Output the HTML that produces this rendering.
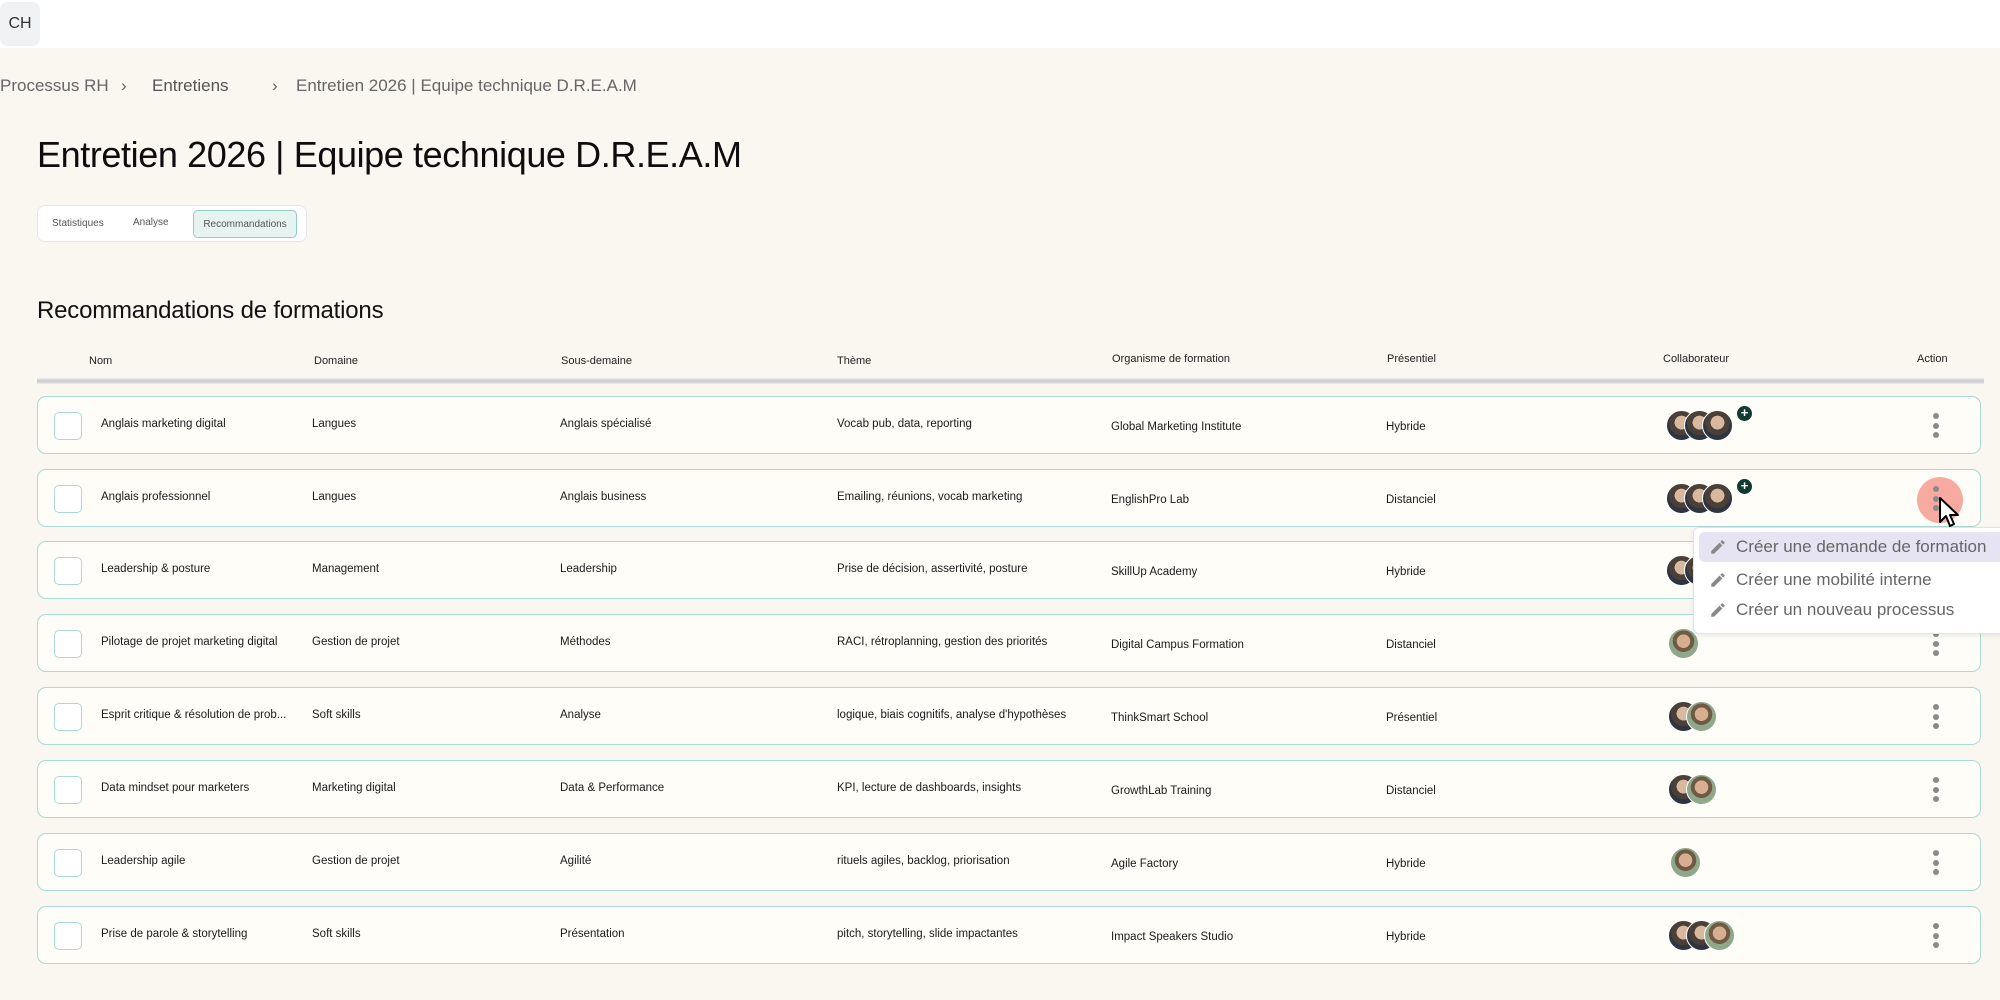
<!DOCTYPE html>
<html><head><meta charset="utf-8">
<style>
*{box-sizing:border-box;margin:0;padding:0}
body{width:2000px;height:1000px;background:#faf6f0;font-family:"Liberation Sans",sans-serif;color:#111;position:relative;overflow:hidden}
.top{position:absolute;left:0;top:0;width:2000px;height:48px;background:#fff}
.ch{position:absolute;left:0;top:2px;width:40px;height:44px;background:#f1f2f3;border-radius:8px;font-size:16px;color:#333;display:flex;align-items:center;justify-content:center}
.bc{position:absolute;top:76px;left:0;font-size:17px;color:#666;white-space:nowrap}
.bc span{position:absolute;white-space:nowrap}
h1{position:absolute;left:37px;top:134px;font-size:36px;font-weight:500;letter-spacing:-0.4px;white-space:nowrap;color:#0d0d0d}
.tabs{position:absolute;left:37px;top:205px;width:270px;height:37px;background:#fff;border:1px solid #e6e6ea;border-radius:8px}
.tabs span{position:absolute;top:12px;font-size:10px;color:#555}
.tabs .act{top:4px;left:155px;width:104px;height:28px;background:#e6f3f1;border:1px solid #8fcfc8;border-radius:5px;display:flex;align-items:center;justify-content:center}
h2{position:absolute;left:37px;top:297px;font-size:24px;font-weight:500;letter-spacing:-0.2px;white-space:nowrap}
.hd{position:absolute;top:355px;font-size:11px;color:#222;white-space:nowrap}
.hl{position:absolute;left:37px;top:378px;width:1947px;height:6px;background:linear-gradient(#eee,#c8c8c8,#eee)}
.row{position:absolute;left:37px;width:1944px;height:58px;background:#fffdf8;border:1.5px solid #a9dad5;border-radius:9px}
.row .cb{position:absolute;left:16px;top:15px;width:28px;height:28px;border:1.5px solid #a9dad5;border-radius:5px;background:#fff}
.row .t{position:absolute;top:21px;font-size:11.5px;color:#1a1a1a;white-space:nowrap}
.row .t2{top:24px}
.dots{position:absolute;left:1895px;top:16px;width:6px}
.dots i{display:block;width:6px;height:6px;border-radius:50%;background:#8a8a8a;margin-bottom:3.5px}
.av{position:absolute;top:13px;width:31px;height:31px;border-radius:50%;border:1.5px solid #fff;background:radial-gradient(circle at 50% 40%,#d9b8a0 0 30%,#4b4038 31% 55%,#2e3440 56%)}
.av.b{background:radial-gradient(circle at 50% 42%,#d8ae90 0 30%,#6f5a44 31% 48%,#8fa88a 49%)}
.plus{position:absolute;top:9px;width:15px;height:15px;border-radius:50%;background:#0f3b31;color:#fff;font-size:13px;line-height:14px;text-align:center;font-weight:bold}
.menu{position:absolute;left:1693px;top:527px;width:320px;height:107px;background:#fff;border:1px solid #e2e0f3;border-radius:6px;box-shadow:0 2px 6px rgba(0,0,0,.08)}
.mi{position:absolute;left:5px;width:310px;height:30px;font-size:17px;color:#666;white-space:nowrap;padding-left:37px;line-height:30px}
.mi.h{background:#e6e4f3;border-radius:6px}
.mi svg{position:absolute;left:10px;top:6px}
</style></head><body>
<div class="top"><div class="ch">CH</div></div>
<div class="bc"><span style="left:0">Processus RH</span><span style="left:121px">›</span><span style="left:152px;color:#555">Entretiens</span><span style="left:272px">›</span><span style="left:296px">Entretien 2026 | Equipe technique D.R.E.A.M</span></div>
<h1>Entretien 2026 | Equipe technique D.R.E.A.M</h1>
<div class="tabs"><span style="left:14px">Statistiques</span><span style="left:95px;top:11px">Analyse</span><span class="act" style="font-size:10px;color:#555">Recommandations</span></div>
<h2>Recommandations de formations</h2>
<div class="hd" style="left:89px">Nom</div>
<div class="hd" style="left:314px">Domaine</div>
<div class="hd" style="left:561px">Sous-demaine</div>
<div class="hd" style="left:837px">Thème</div>
<div class="hd" style="left:1112px;top:353px">Organisme de formation</div>
<div class="hd" style="left:1387px;top:353px">Présentiel</div>
<div class="hd" style="left:1663px;top:353px">Collaborateur</div>
<div class="hd" style="left:1917px;top:353px">Action</div>
<div class="hl"></div>

<div class="row" style="top:396px"><div class="cb"></div><div class="t" style="left:63px">Anglais marketing digital</div><div class="t" style="left:274px">Langues</div><div class="t" style="left:522px">Anglais spécialisé</div><div class="t" style="left:799px">Vocab pub, data, reporting</div><div class="t t2" style="left:1073px">Global Marketing Institute</div><div class="t t2" style="left:1348px">Hybride</div><div class="av" style="left:1628px"></div><div class="av" style="left:1646px"></div><div class="av" style="left:1664px"></div><div class="plus" style="left:1699px">+</div><div class="dots"><i></i><i></i><i></i></div></div>

<div class="row" style="top:469px"><div class="cb"></div><div class="t" style="left:63px">Anglais professionnel</div><div class="t" style="left:274px">Langues</div><div class="t" style="left:522px">Anglais business</div><div class="t" style="left:799px">Emailing, réunions, vocab marketing</div><div class="t t2" style="left:1073px">EnglishPro Lab</div><div class="t t2" style="left:1348px">Distanciel</div><div class="av" style="left:1628px"></div><div class="av" style="left:1646px"></div><div class="av" style="left:1664px"></div><div class="plus" style="left:1699px">+</div><div style="position:absolute;left:1879px;top:7px;width:46px;height:46px;border-radius:50%;background:#f6aaa0"></div><div class="dots"><i></i><i></i><i></i></div><svg style="position:absolute;left:1900px;top:26px" width="26" height="34" viewBox="0 0 26 34"><path d="M2 2 L2 26 L8 20 L12 30 L16 28 L12 19 L20 19 Z" fill="#fff" stroke="#000" stroke-width="2" stroke-linejoin="round"/></svg></div>

<div class="row" style="top:541px"><div class="cb"></div><div class="t" style="left:63px">Leadership &amp; posture</div><div class="t" style="left:274px">Management</div><div class="t" style="left:522px">Leadership</div><div class="t" style="left:799px">Prise de décision, assertivité, posture</div><div class="t t2" style="left:1073px">SkillUp Academy</div><div class="t t2" style="left:1348px">Hybride</div><div class="av" style="left:1628px"></div><div class="av" style="left:1646px"></div><div class="dots"><i></i><i></i><i></i></div></div>

<div class="row" style="top:614px"><div class="cb"></div><div class="t" style="left:63px">Pilotage de projet marketing digital</div><div class="t" style="left:274px">Gestion de projet</div><div class="t" style="left:522px">Méthodes</div><div class="t" style="left:799px">RACI, rétroplanning, gestion des priorités</div><div class="t t2" style="left:1073px">Digital Campus Formation</div><div class="t t2" style="left:1348px">Distanciel</div><div class="av b" style="left:1630px"></div><div class="dots"><i></i><i></i><i></i></div></div>

<div class="row" style="top:687px"><div class="cb"></div><div class="t" style="left:63px">Esprit critique &amp; résolution de prob...</div><div class="t" style="left:274px">Soft skills</div><div class="t" style="left:522px">Analyse</div><div class="t" style="left:799px">logique, biais cognitifs, analyse d'hypothèses</div><div class="t t2" style="left:1073px">ThinkSmart School</div><div class="t t2" style="left:1348px">Présentiel</div><div class="av" style="left:1630px"></div><div class="av b" style="left:1648px"></div><div class="dots"><i></i><i></i><i></i></div></div>

<div class="row" style="top:760px"><div class="cb"></div><div class="t" style="left:63px">Data mindset pour marketers</div><div class="t" style="left:274px">Marketing digital</div><div class="t" style="left:522px">Data &amp; Performance</div><div class="t" style="left:799px">KPI, lecture de dashboards, insights</div><div class="t t2" style="left:1073px">GrowthLab Training</div><div class="t t2" style="left:1348px">Distanciel</div><div class="av" style="left:1630px"></div><div class="av b" style="left:1648px"></div><div class="dots"><i></i><i></i><i></i></div></div>

<div class="row" style="top:833px"><div class="cb"></div><div class="t" style="left:63px">Leadership agile</div><div class="t" style="left:274px">Gestion de projet</div><div class="t" style="left:522px">Agilité</div><div class="t" style="left:799px">rituels agiles, backlog, priorisation</div><div class="t t2" style="left:1073px">Agile Factory</div><div class="t t2" style="left:1348px">Hybride</div><div class="av b" style="left:1632px"></div><div class="dots"><i></i><i></i><i></i></div></div>

<div class="row" style="top:906px"><div class="cb"></div><div class="t" style="left:63px">Prise de parole &amp; storytelling</div><div class="t" style="left:274px">Soft skills</div><div class="t" style="left:522px">Présentation</div><div class="t" style="left:799px">pitch, storytelling, slide impactantes</div><div class="t t2" style="left:1073px">Impact Speakers Studio</div><div class="t t2" style="left:1348px">Hybride</div><div class="av" style="left:1630px"></div><div class="av" style="left:1648px"></div><div class="av b" style="left:1666px"></div><div class="dots"><i></i><i></i><i></i></div></div>

<div class="menu">
<div class="mi h" style="top:4px"><svg width="18" height="18" viewBox="0 0 24 24"><path d="M3 17.25V21h3.75L17.8 9.94l-3.75-3.75L3 17.25zM20.7 7.04a1 1 0 000-1.41l-2.34-2.34a1 1 0 00-1.41 0l-1.83 1.83 3.75 3.75 1.83-1.83z" fill="#888"/></svg>Créer une demande de formation</div>
<div class="mi" style="top:37px"><svg width="18" height="18" viewBox="0 0 24 24"><path d="M3 17.25V21h3.75L17.8 9.94l-3.75-3.75L3 17.25zM20.7 7.04a1 1 0 000-1.41l-2.34-2.34a1 1 0 00-1.41 0l-1.83 1.83 3.75 3.75 1.83-1.83z" fill="#888"/></svg>Créer une mobilité interne</div>
<div class="mi" style="top:67px"><svg width="18" height="18" viewBox="0 0 24 24"><path d="M3 17.25V21h3.75L17.8 9.94l-3.75-3.75L3 17.25zM20.7 7.04a1 1 0 000-1.41l-2.34-2.34a1 1 0 00-1.41 0l-1.83 1.83 3.75 3.75 1.83-1.83z" fill="#888"/></svg>Créer un nouveau processus</div>
</div>
</body></html>
